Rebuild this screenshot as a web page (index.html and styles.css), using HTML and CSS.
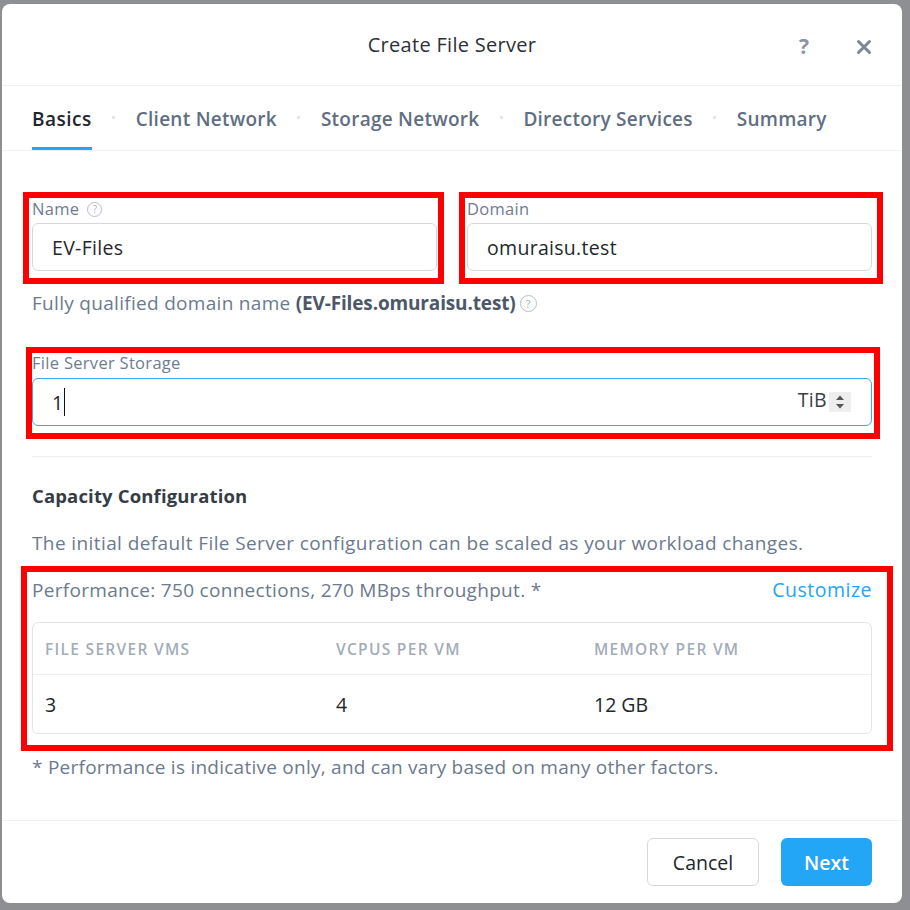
FILE: index.html
```html
<!DOCTYPE html>
<html lang="en">
<head>
<meta charset="utf-8">
<title>Create File Server</title>
<link rel="stylesheet" href="styles.css">
</head>
<body>
<div class="dialog">
  <header class="dlg-head">
    <div class="head-side"></div>
    <h1 class="dlg-title">Create File Server</h1>
    <div class="head-side head-actions">
      <span class="head-help">?</span>
      <svg class="head-close" width="16" height="16" viewBox="0 0 16 16" aria-hidden="true">
        <path d="M2.5 2.5 L13.5 13.5 M13.5 2.5 L2.5 13.5" stroke="#7b8799" stroke-width="3" stroke-linecap="round" fill="none"/>
      </svg>
    </div>
  </header>

  <nav class="tabs">
    <span class="tab active">Basics</span><span class="tab-sep"></span>
    <span class="tab">Client Network</span><span class="tab-sep"></span>
    <span class="tab">Storage Network</span><span class="tab-sep"></span>
    <span class="tab">Directory Services</span><span class="tab-sep"></span>
    <span class="tab">Summary</span>
  </nav>

  <main class="dlg-body">
    <div class="row2">
      <div class="field">
        <div class="field-label">Name <span class="qicon">?</span></div>
        <div class="input">EV-Files</div>
      </div>
      <div class="field">
        <div class="field-label">Domain</div>
        <div class="input">omuraisu.test</div>
      </div>
    </div>

    <p class="fqdn">Fully qualified domain name <b>(EV-Files.omuraisu.test)</b> <span class="qicon">?</span></p>

    <div class="field storage">
      <div class="field-label">File Server Storage</div>
      <div class="input focus">
        <span class="input-val">1<span class="caret"></span></span>
        <span class="unit">TiB</span>
        <span class="spin">
          <svg width="22" height="20" viewBox="0 0 22 20" aria-hidden="true">
            <path d="M7 8 L11 3.5 L15 8 Z" fill="#555"/>
            <path d="M7 12 L11 16.5 L15 12 Z" fill="#555"/>
          </svg>
        </span>
      </div>
    </div>

    <div class="divider"></div>

    <h2 class="section-title">Capacity Configuration</h2>
    <p class="desc">The initial default File Server configuration can be scaled as your workload changes.</p>

    <div class="perf">
      <span>Performance: 750 connections, 270 MBps throughput. *</span>
      <span class="link">Customize</span>
    </div>

    <div class="cap-table">
      <div class="cap-row cap-head">
        <div class="cell">FILE SERVER VMS</div>
        <div class="cell">VCPUS PER VM</div>
        <div class="cell">MEMORY PER VM</div>
      </div>
      <div class="cap-row cap-data">
        <div class="cell">3</div>
        <div class="cell">4</div>
        <div class="cell">12 GB</div>
      </div>
    </div>

    <p class="note">* Performance is indicative only, and can vary based on many other factors.</p>
  </main>

  <footer class="dlg-foot">
    <button class="btn btn-cancel">Cancel</button>
    <button class="btn btn-next">Next</button>
  </footer>

  <div class="annot annot-name"></div>
  <div class="annot annot-domain"></div>
  <div class="annot annot-storage"></div>
  <div class="annot annot-capacity"></div>
</div>
</body>
</html>
```

FILE: styles.css
```css
* { box-sizing: border-box; }

html, body {
  margin: 0;
  padding: 0;
}

body {
  width: 910px;
  height: 910px;
  background: #8e8f93;
  font-family: "Open Sans", "Liberation Sans", sans-serif;
  overflow: hidden;
}

.dialog {
  position: relative;
  margin: 4px 0 0 2px;
  width: 900px;
  height: 899px;
  background: #ffffff;
  border-radius: 8px;
  display: flex;
  flex-direction: column;
}

/* header */
.dlg-head {
  height: 82px;
  flex: none;
  display: grid;
  grid-template-columns: 1fr auto 1fr;
  align-items: center;
  padding: 0 30px;
  border-bottom: 1px solid #eff0f2;
}

.dlg-title {
  margin: 0;
  font-size: 20px;
  font-weight: 400;
  color: #2d3139;
  letter-spacing: 0.3px;
}

.head-actions {
  display: flex;
  justify-content: flex-end;
  align-items: center;
  gap: 47px;
  padding-top: 4px;
}

.head-help {
  font-size: 21px;
  font-weight: 700;
  color: #8a94a4;
  line-height: 1;
}

.head-close {
  display: block;
}

/* tabs */
.tabs {
  flex: none;
  height: 65px;
  display: flex;
  align-items: stretch;
  padding: 0 30px;
  border-bottom: 1px solid #f0f1f3;
}

.tab {
  display: flex;
  align-items: center;
  font-size: 19px;
  font-weight: 600;
  letter-spacing: 0.25px;
  color: #5f6e82;
  padding-top: 1px;
}

.tab.active {
  color: #22262c;
  letter-spacing: 0.5px;
  box-shadow: inset 0 -3px 0 #22a5f7;
}

.tab-sep {
  width: 44px;
  display: flex;
  align-items: center;
  justify-content: center;
}

.tab-sep::before {
  content: "";
  width: 3px;
  height: 3px;
  background: #e3e5e8;
  margin-top: -2px;
}

/* body */
.dlg-body {
  flex: 1;
  padding: 48px 30px 0 30px;
}

.row2 {
  display: grid;
  grid-template-columns: 405px 405px;
  gap: 30px;
}

.field-label {
  height: 20px;
  display: flex;
  align-items: center;
  gap: 8px;
  font-size: 16.5px;
  letter-spacing: 0.3px;
  color: #6e7c90;
  line-height: 20px;
}

.qicon {
  display: inline-flex;
  align-items: center;
  justify-content: center;
  width: 15px;
  height: 15px;
  border: 1px solid #b8bec8;
  border-radius: 50%;
  font-size: 10px;
  color: #a9b0bb;
  line-height: 1;
  font-weight: 400;
  letter-spacing: 0;
}

.input {
  margin-top: 4px;
  height: 48px;
  border: 1px solid #d5d9df;
  border-radius: 6px;
  display: flex;
  align-items: center;
  padding: 0 19px;
  font-size: 19.5px;
  letter-spacing: 0.3px;
  color: #23272d;
}

.fqdn {
  margin: 20px 0 0 0;
  height: 24px;
  line-height: 24px;
  font-size: 19px;
  letter-spacing: 0.3px;
  color: #6b7a8e;
  display: flex;
  align-items: center;
  white-space: pre;
}

.fqdn b {
  font-weight: 700;
  color: #4c5868;
  letter-spacing: -0.15px;
}

.fqdn .qicon {
  width: 17px;
  height: 17px;
  font-size: 11px;
  margin-left: 4px;
}

.storage {
  margin-top: 38px;
}

.storage .input {
  margin-top: 5px;
}

.input.focus {
  border-color: #3aa9f3;
  padding-right: 20px;
}

.input-val {
  flex: 1;
  display: flex;
  align-items: center;
}

.caret {
  display: inline-block;
  width: 1px;
  height: 28px;
  background: #111;
  margin-left: 1px;
}

.unit {
  color: #3a3f47;
  margin-top: -6px;
}

.spin {
  display: block;
  width: 22px;
  height: 20px;
  background: #eeeeee;
  margin-left: 2px;
}

.spin svg {
  display: block;
}

.divider {
  margin-top: 30px;
  height: 1px;
  background: #eceef1;
}

.section-title {
  margin: 27px 0 0 0;
  height: 24px;
  line-height: 24px;
  font-size: 18.5px;
  font-weight: 700;
  letter-spacing: 0.15px;
  color: #363c45;
}

.desc {
  margin: 23px 0 0 0;
  height: 24px;
  line-height: 24px;
  font-size: 19px;
  letter-spacing: 0.4px;
  color: #6b7a8e;
}

.perf {
  margin-top: 23px;
  height: 24px;
  line-height: 24px;
  font-size: 19px;
  letter-spacing: 0.3px;
  color: #6b7a8e;
  display: flex;
  justify-content: space-between;
}

.perf .link {
  color: #22a5f7;
  font-size: 19.5px;
  letter-spacing: 0.5px;
}

.cap-table {
  margin-top: 20px;
  border: 1px solid #e1e4e8;
  border-radius: 6px;
}

.cap-row {
  display: grid;
  grid-template-columns: 291px 258px 1fr;
  align-items: center;
}

.cap-head {
  height: 52px;
  border-bottom: 1px solid #eceef1;
}

.cap-data {
  height: 58px;
}

.cell {
  padding-left: 12px;
}

.cap-head .cell {
  font-size: 15.5px;
  font-weight: 600;
  letter-spacing: 1.3px;
  color: #a3acb9;
  padding-top: 1px;
}

.cap-data .cell {
  font-size: 19.5px;
  color: #23272d;
  padding-top: 0;
}

.note {
  margin: 21px 0 0 0;
  height: 24px;
  line-height: 24px;
  font-size: 19px;
  letter-spacing: 0.25px;
  color: #6b7a8e;
}

/* footer */
.dlg-foot {
  flex: none;
  height: 83px;
  border-top: 1px solid #eff0f2;
  display: flex;
  justify-content: flex-end;
  align-items: flex-start;
  gap: 22px;
  padding: 17px 30px 0 0;
}

.btn {
  height: 48px;
  border-radius: 6px;
  font-family: "Open Sans", "Liberation Sans", sans-serif;
  font-size: 19.5px;
  padding: 0;
  cursor: pointer;
}

.btn-cancel {
  width: 112px;
  background: #ffffff;
  border: 1px solid #d5d9df;
  color: #23272d;
}

.btn-next {
  width: 91px;
  background: #24a6f7;
  border: none;
  color: #ffffff;
  font-weight: 600;
}

/* red annotation boxes drawn over the screenshot */
.annot {
  position: absolute;
  border: 6px solid #ff0000;
  pointer-events: none;
}

.annot-name {
  left: 21px;
  top: 188px;
  width: 421px;
  height: 92px;
}

.annot-domain {
  left: 457px;
  top: 188px;
  width: 424px;
  height: 92px;
}

.annot-storage {
  left: 24px;
  top: 343px;
  width: 854px;
  height: 92px;
}

.annot-capacity {
  left: 19px;
  top: 562px;
  width: 872px;
  height: 185px;
}
```
